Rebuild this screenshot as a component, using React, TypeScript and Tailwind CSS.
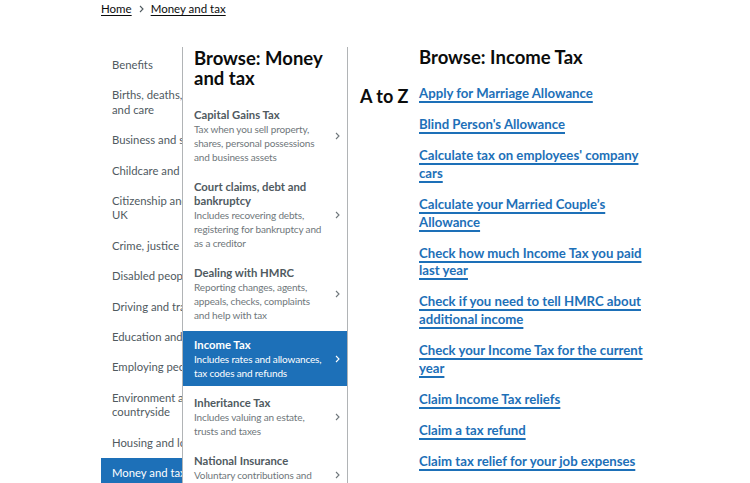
import React from "react";

const leftItems: { lines: string[]; active?: boolean }[] = [
  { lines: ["Benefits"] },
  { lines: ["Births, deaths, marriages", "and care"] },
  { lines: ["Business and self-employed"] },
  { lines: ["Childcare and parenting"] },
  { lines: ["Citizenship and living in the", "UK"] },
  { lines: ["Crime, justice and the law"] },
  { lines: ["Disabled people"] },
  { lines: ["Driving and transport"] },
  { lines: ["Education and learning"] },
  { lines: ["Employing people"] },
  { lines: ["Environment and", "countryside"] },
  { lines: ["Housing and local services"] },
  { lines: ["Money and tax"], active: true },
];

const midItems: { title: string; desc: string; active?: boolean }[] = [
  { title: "Capital Gains Tax", desc: "Tax when you sell property, shares, personal possessions and business assets" },
  { title: "Court claims, debt and bankruptcy", desc: "Includes recovering debts, registering for bankruptcy and as a creditor" },
  { title: "Dealing with HMRC", desc: "Reporting changes, agents, appeals, checks, complaints and help with tax" },
  { title: "Income Tax", desc: "Includes rates and allowances, tax codes and refunds", active: true },
  { title: "Inheritance Tax", desc: "Includes valuing an estate, trusts and taxes" },
  { title: "National Insurance", desc: "Voluntary contributions and credits" },
];

const links = [
  "Apply for Marriage Allowance",
  "Blind Person's Allowance",
  "Calculate tax on employees' company cars",
  "Calculate your Married Couple’s Allowance",
  "Check how much Income Tax you paid last year",
  "Check if you need to tell HMRC about additional income",
  "Check your Income Tax for the current year",
  "Claim Income Tax reliefs",
  "Claim a tax refund",
  "Claim tax relief for your job expenses",
];

function Chevron({ color }: { color: string }) {
  return (
    <svg width="5" height="8" viewBox="0 0 5 8" className="shrink-0">
      <path d="M1 1l3 3-3 3" fill="none" stroke={color} strokeWidth="1.1" />
    </svg>
  );
}

export default function App() {
  return (
    <div
      className="w-[750px] h-[483px] overflow-hidden bg-white text-[#0b0c0c]"
      style={{ fontFamily: 'Lato, "Noto Sans", Arial, sans-serif' }}
    >
      {/* breadcrumb */}
      <div className="pl-[101px] pt-[0px] flex items-center h-[18px] text-[11.5px] leading-[16px]">
        <a className="underline underline-offset-2 decoration-[1px] text-[#0b0c0c]">Home</a>
        <span className="mx-[7px] flex items-center">
          <Chevron color="#505a5f" />
        </span>
        <a className="underline underline-offset-2 decoration-[1px] text-[#0b0c0c]">Money and tax</a>
      </div>

      <div className="flex pl-[101px] mt-[29px]">
        {/* left column (clipped) */}
        <div className="w-[81px] overflow-hidden shrink-0">
          <ul className="w-[170px] pt-[3px]">
            {leftItems.map((it) => (
              <li
                key={it.lines[0]}
                className={
                  "pl-[11px] pr-2 py-[8px] text-[11.3px] leading-[14.4px] whitespace-nowrap " +
                  (it.active ? "bg-[#1d70b8] text-white" : "text-[#505a5f]")
                }
              >
                {it.lines.map((ln) => (
                  <div key={ln}>{ln}</div>
                ))}
              </li>
            ))}
          </ul>
        </div>

        {/* middle column */}
        <div className="w-[166px] shrink-0 border-l border-r border-[#b1b4b6] bg-white">
          <h2 className="pl-[11px] pr-2 pt-[1px] text-[18.5px] leading-[20px] font-bold text-[#0b0c0c]">
            Browse: Money and tax
          </h2>
          <ul className="mt-[13px]">
            {midItems.map((it) => (
              <li
                key={it.title}
                className={
                  "flex items-center pl-[11px] pr-[7px] pt-[7px] pb-[6px] mb-[3px] " +
                  (it.active ? "bg-[#1d70b8]" : "")
                }
              >
                <div className="flex-1 pr-[11px]">
                  <div
                    className={
                      "text-[11.3px] leading-[14px] font-bold " +
                      (it.active ? "text-white" : "text-[#505a5f]")
                    }
                  >
                    {it.title}
                  </div>
                  <div
                    className={
                      "text-[10px] leading-[14px] tracking-[-0.15px] " +
                      (it.active ? "text-white" : "text-[#6f777b]")
                    }
                  >
                    {it.desc}
                  </div>
                </div>
                <Chevron color={it.active ? "#ffffff" : "#6f777b"} />
              </li>
            ))}
          </ul>
        </div>

        {/* right column */}
        <div className="pl-[12px] grid grid-cols-[59px_230px] content-start">
          <div />
          <h2 className="pt-[0px] text-[18.5px] leading-[20px] font-bold text-[#0b0c0c]">Browse: Income Tax</h2>
          <div className="pt-[19px] text-[18px] leading-[20px] font-bold text-[#0b0c0c]">A to Z</div>
          <ul className="pt-[18px]">
            {links.map((l) => (
              <li key={l} className="mb-[13.7px] text-[13.2px] leading-[17.5px] font-bold">
                <a className="text-[#1d70b8] underline decoration-[2px] underline-offset-[3px]">{l}</a>
              </li>
            ))}
          </ul>
        </div>
      </div>
    </div>
  );
}
